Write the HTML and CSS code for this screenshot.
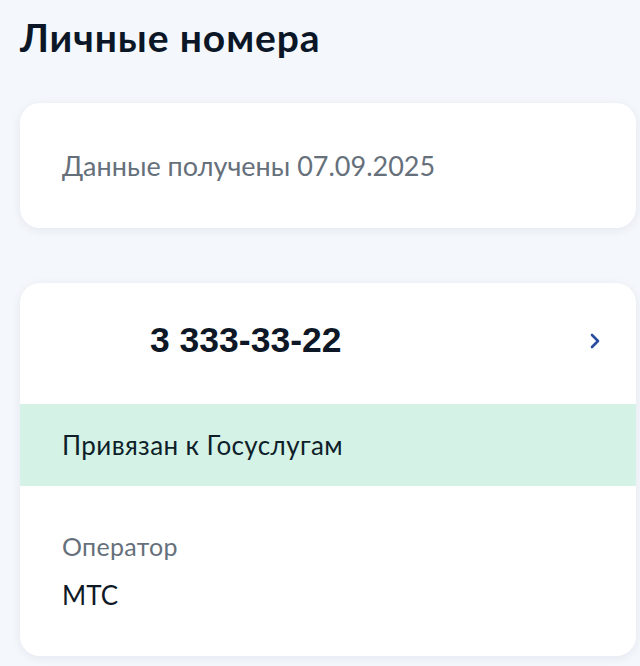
FILE: index.html
```html
<!DOCTYPE html>
<html lang="ru">
<head>
<meta charset="utf-8">
<link rel="stylesheet" href="styles.css">
</head>
<body>
<main class="page">
  <h1 class="title">Личные номера</h1>
  <section class="card info-card">
    <p class="muted-text">Данные получены 07.09.2025</p>
  </section>
  <section class="card phone-card">
    <div class="phone-row">
      <span class="phone">3 333-33-22</span>
      <svg class="chevron" width="14" height="18" viewBox="0 0 14 18" aria-hidden="true">
        <path d="M4 3 L10 9 L4 15" fill="none" stroke="#2a4c9e" stroke-width="2.6" stroke-linecap="round" stroke-linejoin="round"/>
      </svg>
    </div>
    <div class="status">Привязан к Госуслугам</div>
    <div class="operator">
      <div class="label">Оператор</div>
      <div class="value">МТС</div>
    </div>
  </section>
</main>
</body>
</html>
```
FILE: styles.css
```css
* { box-sizing: border-box; }
html, body { margin: 0; padding: 0; }
body {
  background: #f4f7fb;
  font-family: Lato, "Open Sans", sans-serif;
  color: #0b1a2b;
  width: 640px;
  height: 666px;
  overflow: hidden;
}
.page {
  padding: 12px 4px 0 20px;
  display: flex;
  flex-direction: column;
}
.title {
  margin: 0;
  font-size: 39px;
  font-weight: 700;
  line-height: 50px;
  color: #0b1626;
  letter-spacing: 0.9px;
}
.card {
  background: #fff;
  border-radius: 20px;
  box-shadow: 0 2px 10px rgba(40, 70, 120, 0.08);
  overflow: hidden;
}
.info-card {
  margin-top: 41px;
  height: 125px;
  display: flex;
  align-items: center;
  padding-left: 42px;
}
.muted-text {
  margin: 0;
  font-size: 27px;
  color: #66707b;
}
.phone-card {
  margin-top: 55px;
  height: 373px;
}
.phone-row {
  height: 121px;
  display: flex;
  align-items: center;
  justify-content: space-between;
  padding: 0 34px 6px 130px;
}
.phone {
  font-family: "Liberation Sans", Arial, sans-serif;
  font-weight: 700;
  font-size: 35.5px;
  color: #0d1726;
}
.chevron { display: block; }
.status {
  background: #d4f3e6;
  height: 82px;
  display: flex;
  align-items: center;
  padding-left: 42px;
  font-size: 26px;
  letter-spacing: 0.4px;
  color: #0f1f2a;
}
.operator {
  padding: 45px 0 0 42px;
}
.label {
  font-size: 25px;
  letter-spacing: 0.3px;
  color: #66707b;
  line-height: 30px;
}
.value {
  margin-top: 19px;
  font-size: 26px;
  color: #0f1a26;
  line-height: 30px;
}
```
